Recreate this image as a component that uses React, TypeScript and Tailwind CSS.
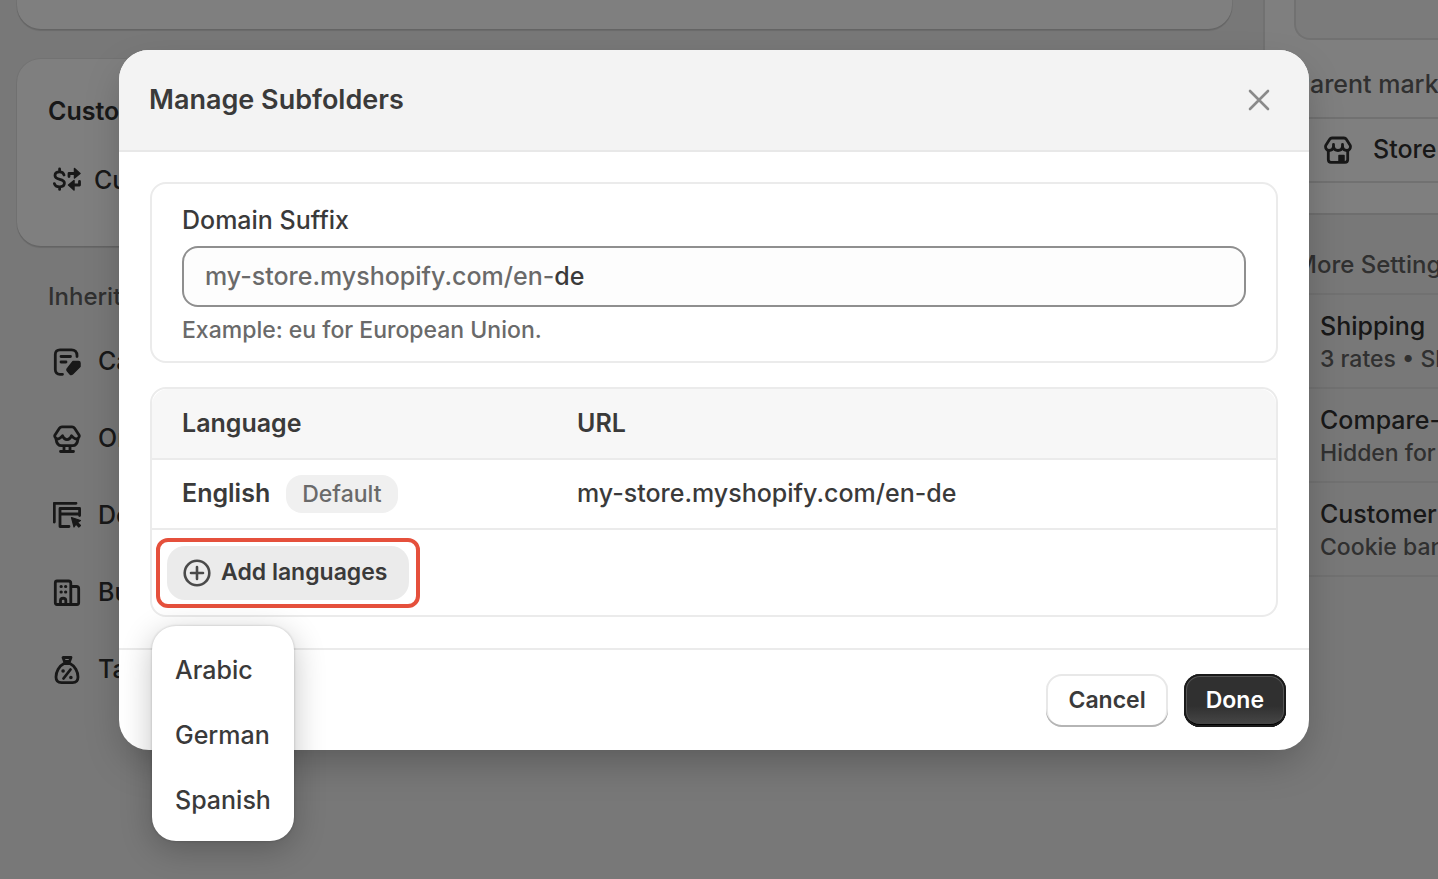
import { useState } from 'react';
import type { ReactNode } from 'react';

type IconProps = { children: ReactNode };

// Shared frame for the 28px line icons
function Icon({ children }: IconProps) {
  return (
    <svg
      width="28"
      height="28"
      viewBox="0 0 28 28"
      fill="none"
      stroke="currentColor"
      strokeWidth="2.8"
      strokeLinecap="round"
      strokeLinejoin="round"
      aria-hidden="true"
      className="shrink-0"
    >
      {children}
    </svg>
  );
}

function CurrencyIcon() {
  return (
    <Icon>
      <path d="M11 9C10.500 6.800 9 5.800 6.600 5.800C3.800 5.800 2 7.200 2 9.500C2 14.800 11.400 11.800 11.400 17C11.400 19.400 9.400 20.800 6.600 20.800C4 20.800 2 19.800 1.400 17.600M6.600 3V5.500M6.600 21V23.400" />
      <path d="M16 10.500V7.500H22" />
      <path d="M21.500 2.500L27 7.500L21.500 12Z" fill="currentColor" strokeWidth="1.500" />
      <path d="M26.500 15.500V19H21" />
      <path d="M21 14.500L15.500 19L21 24Z" fill="currentColor" strokeWidth="1.500" />
    </Icon>
  );
}

function CatalogIcon() {
  return (
    <Icon>
      <path d="M9.500 26.300H7C4 26.300 2.300 24.500 2.300 21.500V6.500C2.300 3.500 4 1.800 7 1.800H18.500C21.800 1.800 24 4 24 7.500V8.500" />
      <path d="M8 8.500H17.500M8 14H13" />
      <path d="M20 13.500H25.500C26.500 13.500 27 14 27 15V18.500L19.500 26C18.700 26.700 17.700 26.700 17 26L14.500 23C13.800 22.200 13.900 21 14.700 20.200Z" fill="currentColor" strokeWidth="1.500" />
    </Icon>
  );
}

function OnlineStoreIcon() {
  return (
    <Icon>
      <path d="M9 1.800H19C20 1.800 21 2.300 21.600 3.200L26 10C26.300 10.500 26.300 11.500 26 12C25 14.500 22 14.500 20.500 12.700L18.500 10.800C17.500 13.600 15.500 14.700 14 14.700C12.500 14.700 10.500 13.600 9.500 10.800L7.500 12.700C6 14.500 3 14.500 2 12C1.700 11.500 1.700 10.500 2 10L6.400 3.200C7 2.300 8 1.800 9 1.800Z" />
      <path d="M3 14C3.500 18 5 20.700 8.500 20.700H19.500C23 20.700 24.500 18 25 14" />
      <path d="M11 21.500V26M17 21.500V26M7.500 26.500H20.500" />
    </Icon>
  );
}

function DomainIcon() {
  return (
    <Icon>
      <path d="M1.300 20V1.300H23" />
      <path d="M16 24.500H7V6.500H26.600V13.500M7 12H26.600" />
      <path d="M18.500 15.500L27.500 18.500L24.500 20.500L27.500 23.500L25.800 25L23 22.200L21 25Z" fill="currentColor" strokeWidth="1.200" />
    </Icon>
  );
}

function BusinessIcon() {
  return (
    <Icon>
      <path d="M4 2H15.500C17 2 17.800 2.800 17.800 4.200V25.500H4C2.800 25.500 2.300 24.800 2.300 23.800V4C2.300 2.800 3 2 4 2Z" />
      <path d="M18.500 7.500H23.500C24.900 7.500 25.700 8.300 25.700 9.700V23.800C25.700 24.800 25.100 25.500 24 25.500H18" />
      <path d="M8 7.500H8.300M12.500 7.500H12.800M8 13H8.300M12.500 13H12.800" strokeWidth="3" />
      <path d="M7.500 25V21.500C7.500 18.500 12.800 18.500 12.800 21.500V25" />
    </Icon>
  );
}

function TaxIcon() {
  return (
    <Icon>
      <path d="M10 1.500H18L16.500 5.500H11.500Z" />
      <path d="M11 7.500C6 10 3 16 3 21C3 25 5 26.600 8.500 26.600H19.500C23 26.600 25 25 25 21C25 16 22 10 17 7.500Z" />
      <path d="M17.500 13.500L10.500 22.500" />
      <path d="M10 15H10.200M17.800 21.500H18" strokeWidth="3.400" />
    </Icon>
  );
}

function StoreIcon() {
  return (
    <Icon>
      <path d="M8 2H20C21 2 21.800 2.400 22.300 3.200L26.300 9.500C27 12.500 25 14.500 23 14.500C21 14.500 19 13.500 18.500 11C18 13.500 16 14.500 14 14.500C12 14.500 10 13.500 9.500 11C9 13.500 7 14.500 5 14.500C3 14.500 1 12.500 1.700 9.500L5.700 3.200C6.200 2.400 7 2 8 2Z" />
      <path d="M9.500 8.500V11M18.500 8.500V11M4.300 15V23.500C4.300 25.200 5.300 26.300 7 26.300H21C22.700 26.300 23.700 25.200 23.700 23.500V15" />
      <path d="M15 26V19.500H20V26Z" fill="currentColor" strokeWidth="1.500" />
    </Icon>
  );
}

const inherited = [
  { label: 'Catalogs', icon: <CatalogIcon /> },
  { label: 'Online', icon: <OnlineStoreIcon /> },
  { label: 'Domains', icon: <DomainIcon /> },
  { label: 'Business', icon: <BusinessIcon /> },
  { label: 'Taxes', icon: <TaxIcon /> },
];

const moreSettings = [
  { title: 'Shipping', detail: '3 rates • Shipping zones' },
  { title: 'Compare-at price', detail: 'Hidden for this market' },
  { title: 'Customer privacy', detail: 'Cookie banner' },
];

const languages = ['Arabic', 'German', 'Spanish'];

function MarketPage() {
  return (
    <div className="flex h-screen overflow-hidden bg-[#f1f1f1] whitespace-nowrap">
      <main className="min-w-0 flex-1 pr-[31px] pl-[17px]">
        <section className="h-[29px] rounded-b-3xl bg-white shadow-[0_2px_1px_#0000001f,0_0_1px_1px_#0000000f]" />
        <section className="mt-[30px] h-[187px] rounded-3xl bg-white px-[31px] pt-9 shadow-[0_2px_1px_#0000001f,0_0_1px_1px_#0000000f]">
          <h2 className="leading-8 font-semibold">Custom</h2>
          <div className="mt-9 flex items-center gap-[13px] pl-[5px] leading-[34px]">
            <CurrencyIcon />
            Currency
          </div>
        </section>
        <h2 className="mt-[35px] pl-[31px] text-[24px] leading-8 text-[#616161]">Inherited</h2>
        <ul className="mt-[10px] pl-9">
          {inherited.map((row) => (
            <li key={row.label} className="flex h-[77px] items-center gap-[17px]">
              {row.icon}
              {row.label}
            </li>
          ))}
        </ul>
      </main>

      <aside className="w-[175px] shrink-0 overflow-hidden">
        <div className="h-[215px] border-b-2 border-l-2 border-b-[#dcdcdc] border-l-[#e3e3e3] bg-white pl-[29px]">
          <div className="h-10 rounded-bl-2xl border-b-2 border-l-2 border-[#e3e3e3] bg-[#f7f7f7]" />
          <h2 className="mt-7 leading-8 text-[#616161]">Parent market</h2>
          <div className="mt-[17px] flex h-[66px] items-center gap-[21px] rounded-l-2xl border-y-2 border-l-2 border-[#e3e3e3] pl-7">
            <StoreIcon />
            Store default
          </div>
        </div>
        <div className="pl-8">
          <h2 className="mt-[34px] text-[24px] leading-8 text-[#616161]">More Settings</h2>
          <ul className="mt-3 border-t-2 border-l-2 border-[#e3e3e3]">
            {moreSettings.map((row) => (
              <li key={row.title} className="h-[94px] border-b-2 border-[#e3e3e3] pt-[15px] pl-[23px] leading-[33px]">
                <p>{row.title}</p>
                <p className="text-[23px] text-[#616161]">{row.detail}</p>
              </li>
            ))}
          </ul>
        </div>
      </aside>
    </div>
  );
}

export default function App() {
  const [suffix, setSuffix] = useState('de');

  return (
    <div className="relative font-['Inter',sans-serif] text-[25px] font-medium text-[#303030]">
      <MarketPage />

      {/* Backdrop and dialog */}
      <div className="absolute inset-0 bg-black/50 pt-[50px] pr-[129px] pl-[119px]">
        <div
          role="dialog"
          aria-labelledby="dialog-title"
          className="rounded-[30px] bg-white text-[#3a3a3a] shadow-[0_16px_40px_-8px_#00000047]"
        >
          <header className="flex h-[102px] items-center justify-between rounded-t-[30px] border-b-2 border-[#e8e8e8] bg-[#f3f3f3] pr-9 pl-[30px]">
            <h1 id="dialog-title" className="text-[27px] leading-8 font-semibold">Manage Subfolders</h1>
            <button type="button" aria-label="Close" className="text-[#8a8a8a]">
              <svg width="28" height="28" viewBox="0 0 28 28" fill="none" stroke="currentColor" strokeWidth="2.600" strokeLinecap="round">
                <path d="M5 5L23 23M23 5L5 23" />
              </svg>
            </button>
          </header>

          <div className="space-y-6 px-[31px] pt-[30px] pb-[31px]">
            <section className="rounded-2xl border-2 border-[#ebebeb] px-[30px] pt-5 pb-[15px]">
              <label htmlFor="suffix" className="block leading-8">Domain Suffix</label>
              <div className="mt-2.5 flex h-[61px] items-center rounded-2xl border-2 border-[#8f8f8f] bg-[#fdfdfd] px-[21px]">
                <span className="text-[#6a6a6a]">my-store.myshopify.com/en-</span>
                <input
                  id="suffix"
                  type="text"
                  value={suffix}
                  onChange={(e) => setSuffix(e.target.value)}
                  className="min-w-0 flex-1 bg-transparent outline-none"
                />
              </div>
              <p className="mt-[7px] text-[23px] leading-8 text-[#6a6a6a]">Example: eu for European Union.</p>
            </section>

            <section className="rounded-2xl border-2 border-[#ebebeb]">
              <table className="w-full text-left">
                <thead className="bg-[#f7f7f7]">
                  <tr className="h-[70px] border-b-2 border-[#ebebeb]">
                    <th className="w-[393px] rounded-tl-2xl pl-[30px] font-semibold">Language</th>
                    <th className="rounded-tr-2xl pl-8 font-semibold">URL</th>
                  </tr>
                </thead>
                <tbody>
                  <tr className="h-[70px] border-b-2 border-[#ebebeb]">
                    <td className="pl-[30px]">
                      <div className="flex items-center gap-4">
                        <span className="font-semibold">English</span>
                        <span className="rounded-2xl bg-[#f0f0f0] px-4 py-1 text-[23px] leading-[30px] text-[#6a6a6a]">Default</span>
                      </div>
                    </td>
                    <td className="pl-8">my-store.myshopify.com/en-de</td>
                  </tr>
                  <tr>
                    <td colSpan={2} className="h-[86px] pl-1">
                      <div className="relative w-fit rounded-xl border-4 border-[#e5503c] px-[7px] py-1">
                        <button
                          type="button"
                          aria-haspopup="menu"
                          aria-expanded="true"
                          className="flex h-[54px] items-center gap-2.5 rounded-[18px] bg-[#ebebeb] pr-[22px] pl-4 text-[23px] font-semibold"
                        >
                          <svg width="28" height="28" viewBox="0 0 28 28" fill="none" stroke="#4a4a4a" strokeWidth="2.600" strokeLinecap="round" aria-hidden="true">
                            <circle cx="14" cy="14" r="12.300" />
                            <path d="M14 8V20M8 14H20" />
                          </svg>
                          Add languages
                        </button>

                        <ul
                          role="menu"
                          className="absolute top-full -left-2 mt-[22px] rounded-3xl bg-white px-2 pt-[13px] pb-[7px] shadow-[0_0_2px_1px_#0000001a,0_8px_32px_#0000003d]"
                        >
                          {languages.map((language) => (
                            <li key={language} role="none">
                              <button type="button" role="menuitem" className="block h-[65px] px-[15px]">
                                {language}
                              </button>
                            </li>
                          ))}
                        </ul>
                      </div>
                    </td>
                  </tr>
                </tbody>
              </table>
            </section>
          </div>

          <footer className="flex h-[102px] items-center justify-end gap-4 border-t-2 border-[#ebebeb] pr-[23px] text-[23px] font-semibold">
            <button
              type="button"
              className="h-[53px] rounded-2xl bg-white px-[22px] shadow-[inset_0_-2px_0_#b5b5b5,inset_0_0_0_2px_#e8e8e8]"
            >
              Cancel
            </button>
            <button
              type="button"
              className="h-[53px] rounded-2xl bg-linear-to-b from-[#303030] from-60% to-[#4a4a4a] px-[22px] text-white shadow-[inset_0_0_0_2px_#1a1a1a,inset_0_-3px_0_#000000,inset_0_0_0_3px_#555555]"
            >
              Done
            </button>
          </footer>
        </div>
      </div>
    </div>
  );
}
